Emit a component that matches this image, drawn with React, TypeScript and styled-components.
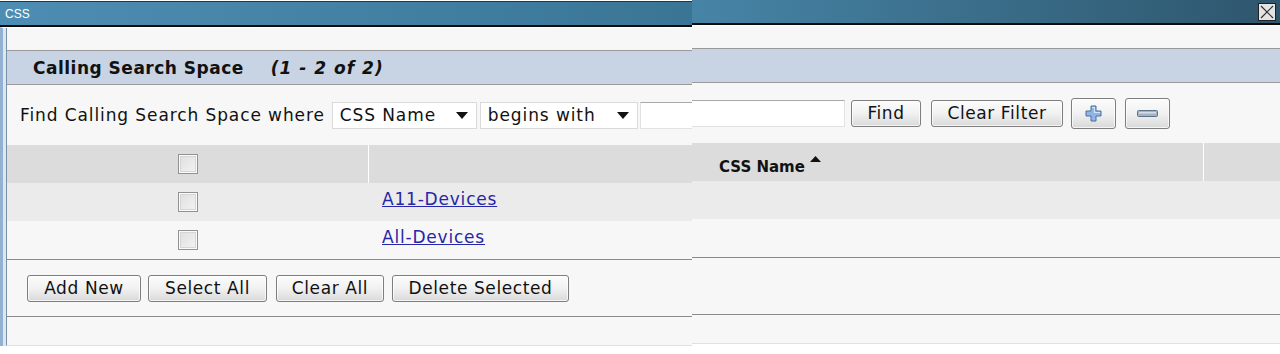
import React from 'react'
import styled, { createGlobalStyle } from 'styled-components'

const GlobalStyle = createGlobalStyle`
  html, body {
    margin: 0;
    padding: 0;
    background: #ffffff;
  }
  body {
    font-family: 'DejaVu Sans', Verdana, sans-serif;
    color: #111;
  }
`

// the screenshot is two captures of the same dialog stitched side by side
const Stage = styled.div`
  display: flex;
  align-items: flex-start;
  width: 1280px;
  height: 354px;
  overflow: hidden;
`

const Pane = styled.div<{ $w: number; $dy: number }>`
  width: ${(p) => p.$w}px;
  flex: none;
  margin-top: ${(p) => -p.$dy}px;
  padding-top: 1px;
  background: #fff;
`

const TitleBar = styled.div<{ $from: string; $to: string }>`
  height: 23px;
  display: flex;
  align-items: center;
  justify-content: space-between;
  padding: 0 4px 0 5px;
  border-top: 1px solid #1d3846;
  border-bottom: 2px solid #0c0c0c;
  background: linear-gradient(90deg, ${(p) => p.$from}, ${(p) => p.$to});
`

const TitleText = styled.span`
  font: 12px 'Liberation Sans', Arial, sans-serif;
  color: #fff;
`

const CloseBox = styled.div`
  width: 16px;
  height: 16px;
  margin-left: auto;
  border: 1px solid #222;
  background: #e4e4e4;
  display: flex;
  align-items: center;
  justify-content: center;
`

const Frame = styled.div<{ $edge?: boolean }>`
  border-top: 1px solid #fff;
  border-left: ${(p) => (p.$edge ? '3px solid #93b1d3' : 'none')};
  padding-left: ${(p) => (p.$edge ? 3 : 0)}px;
  background: #dfe6ee;
`

const Panel = styled.div<{ $edge?: boolean }>`
  border-left: ${(p) => (p.$edge ? '1px solid #7890aa' : 'none')};
  background: #f7f7f7;
  border-bottom: 1px solid #e0e0e0;
`

const Spacer = styled.div<{ $h: number }>`
  height: ${(p) => p.$h}px;
`

const SectionHeader = styled.div`
  height: 33px;
  display: flex;
  align-items: center;
  padding-left: 26px;
  background: #c8d3e3;
  border-top: 1px solid #9a9a9a;
  border-bottom: 1px solid #9a9a9a;
  font-size: 17px;
  font-weight: bold;
  letter-spacing: 0.5px;
`

const Count = styled.span`
  font-style: italic;
  letter-spacing: 1px;
  margin-left: 27px;
`

const FindRow = styled.div<{ $pad: number }>`
  height: 60px;
  display: flex;
  align-items: center;
  padding-left: ${(p) => p.$pad}px;
  font-size: 17px;
  letter-spacing: 0.9px;
`

const FindLabel = styled.span`
  margin-right: 7px;
`

const SelectBox = styled.div<{ $w: number; $gap: number }>`
  width: ${(p) => p.$w}px;
  height: 27px;
  box-sizing: border-box;
  display: flex;
  align-items: center;
  justify-content: space-between;
  padding: 0 8px 0 7px;
  background: #fff;
  border: 1px solid #dadada;
  margin-right: ${(p) => p.$gap}px;
`

// the text box is split by the seam between the two captures
const TextInput = styled.div<{ $w: number; $side: 'start' | 'end' }>`
  width: ${(p) => p.$w}px;
  height: 27px;
  box-sizing: border-box;
  background: #fff;
  border: 1px solid #e2e2e2;
  border-top-color: #a8a8a8;
  ${(p) => (p.$side === 'start' ? 'border-right: none;' : 'border-left: none; margin-right: 6px;')}
`

const Btn = styled.button<{ $w: number; $h?: number; $gap?: number }>`
  width: ${(p) => p.$w}px;
  height: ${(p) => p.$h ?? 27}px;
  margin-right: ${(p) => p.$gap ?? 8}px;
  padding: 0;
  display: flex;
  align-items: center;
  justify-content: center;
  font-family: 'DejaVu Sans', Verdana, sans-serif;
  font-size: 17px;
  letter-spacing: 0.6px;
  color: #111;
  border: 1px solid #7e7e7e;
  border-radius: 3px;
  background: linear-gradient(#fcfcfc, #f1f1f1 50%, #d9d9d9);
  box-shadow: inset 0 0 0 1px rgba(255, 255, 255, 0.7);
`

const Row = styled.div<{ $bg: string; $cols: string }>`
  display: grid;
  grid-template-columns: ${(p) => p.$cols};
  height: 38px;
  background: ${(p) => p.$bg};
`

const HeadCell = styled.div<{ $divider?: boolean }>`
  border-right: ${(p) => (p.$divider ? '1px solid #fff' : 'none')};
  display: flex;
  align-items: center;
  justify-content: center;
`

const HeadLabel = styled.div`
  display: flex;
  align-items: flex-start;
  gap: 5px;
  padding: 10px 0 0 27px;
  border-right: 1px solid #fff;
  font-size: 15px;
  font-weight: bold;
  line-height: 28px;
  svg {
    margin-top: 3px;
  }
`

const CheckCell = styled.div`
  display: flex;
  align-items: center;
  justify-content: center;
`

const Check = styled.div`
  width: 20px;
  height: 20px;
  box-sizing: border-box;
  border: 1px solid #929292;
  box-shadow: inset 0 0 0 1px #fafafa, inset 0 0 0 2px #d6d6d6;
  background: linear-gradient(135deg, #dedede, #f4f4f4);
`

const LinkCell = styled.div`
  padding: 6px 0 0 13px;
  font-size: 17px;
  letter-spacing: 0.8px;
`

const Link = styled.a`
  color: #2626a8;
  text-decoration: underline;
`

const TableEnd = styled.div`
  border-top: 1px solid #8a8a8a;
`

const Footer = styled.div`
  height: 56px;
  display: flex;
  align-items: center;
  padding-left: 20px;
  border-bottom: 1px solid #8a8a8a;
`

const rows = ['A11-Devices', 'All-Devices']
const rowBg = (i: number) => (i % 2 === 0 ? '#ebebeb' : '#f7f7f7')

const Caret = () => (
  <svg width="12" height="7" viewBox="0 0 12 7">
    <path d="M0 0h12L6 7z" fill="#111" />
  </svg>
)

const Plus = () => (
  <svg width="17" height="17" viewBox="0 0 17 17">
    <path d="M6 1h5v5h5v5h-5v5H6v-5H1V6h5z" fill="#8fb5e6" stroke="#4a6e9e" strokeWidth="1" />
    <path d="M7 2h3v5h5v1H9V3H7z" fill="#d4e5fa" />
  </svg>
)

const Minus = () => (
  <svg width="21" height="7" viewBox="0 0 21 7">
    <rect x="0.5" y="0.5" width="20" height="6" rx="1" fill="#a3b2c4" stroke="#607287" />
    <rect x="2" y="2" width="17" height="1.5" fill="#d5dde8" />
  </svg>
)

const LeftPane = () => (
  <Pane $w={692} $dy={0}>
    <TitleBar $from="#4e8db3" $to="#3a7595">
      <TitleText>CSS</TitleText>
    </TitleBar>
    <Frame $edge>
      <Panel $edge>
        <Spacer $h={22} />
        <SectionHeader>
          Calling Search Space<Count>(1 - 2 of 2)</Count>
        </SectionHeader>
        <FindRow $pad={13}>
          <FindLabel>Find Calling Search Space where</FindLabel>
          <SelectBox $w={145} $gap={3}>
            CSS Name
            <Caret />
          </SelectBox>
          <SelectBox $w={158} $gap={2}>
            begins with
            <Caret />
          </SelectBox>
          <TextInput $w={52} $side="start" />
        </FindRow>
        <Row $bg="#dcdcdc" $cols="362px 1fr">
          <HeadCell $divider><Check /></HeadCell>
          <HeadCell />
        </Row>
        {rows.map((name, i) => (
          <Row key={name} $bg={rowBg(i)} $cols="362px 1fr">
            <CheckCell><Check /></CheckCell>
            <LinkCell><Link href="#">{name}</Link></LinkCell>
          </Row>
        ))}
        <TableEnd />
        <Footer>
          <Btn $w={114} $gap={7}>Add New</Btn>
          <Btn $w={119} $gap={9}>Select All</Btn>
          <Btn $w={108} $gap={8}>Clear All</Btn>
          <Btn $w={177}>Delete Selected</Btn>
        </Footer>
        <Spacer $h={28} />
      </Panel>
    </Frame>
  </Pane>
)

const RightPane = () => (
  <Pane $w={588} $dy={2}>
    <TitleBar $from="#4684a6" $to="#2e566d">
      <CloseBox>
        <svg width="14" height="14" viewBox="0 0 14 14">
          <path d="M1 1l12 12M13 1L1 13" stroke="#333" strokeWidth="1.2" />
        </svg>
      </CloseBox>
    </TitleBar>
    <Frame>
      <Panel>
        <Spacer $h={22} />
        <SectionHeader />
        <FindRow $pad={0}>
          <TextInput $w={153} $side="end" />
          <Btn $w={70} $gap={10}>Find</Btn>
          <Btn $w={132} $gap={8}>Clear Filter</Btn>
          <Btn $w={45} $h={31} $gap={9}><Plus /></Btn>
          <Btn $w={45} $h={31}><Minus /></Btn>
        </FindRow>
        <Row $bg="#dcdcdc" $cols="512px 1fr">
          <HeadLabel>
            CSS Name
            <svg width="11" height="6" viewBox="0 0 11 6">
              <path d="M0 6h11L5.5 0z" fill="#111" />
            </svg>
          </HeadLabel>
          <HeadCell />
        </Row>
        {rows.map((name, i) => (
          <Row key={name} $bg={rowBg(i)} $cols="1fr" />
        ))}
        <TableEnd />
        <Footer />
        <Spacer $h={28} />
      </Panel>
    </Frame>
  </Pane>
)

export default function App() {
  return (
    <>
      <GlobalStyle />
      <Stage>
        <LeftPane />
        <RightPane />
      </Stage>
    </>
  )
}
